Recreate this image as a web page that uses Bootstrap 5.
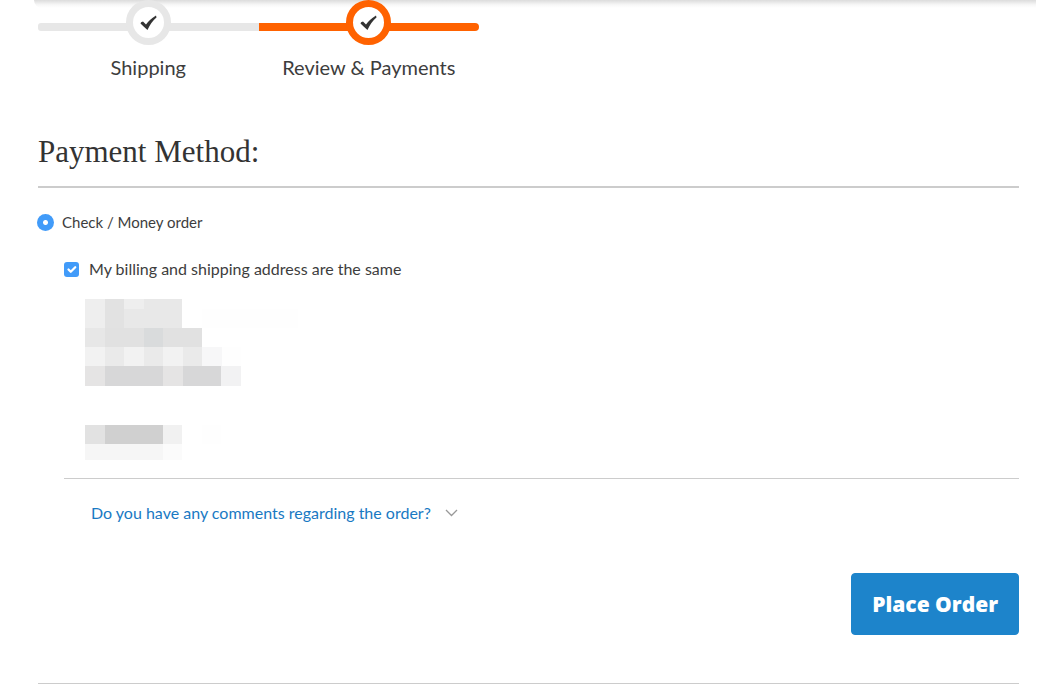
<!DOCTYPE html>
<html lang="en">
<head>
<meta charset="utf-8">
<meta name="viewport" content="width=device-width, initial-scale=1">
<title>Checkout</title>
<link href="https://cdn.jsdelivr.net/npm/bootstrap@5.3.0/dist/css/bootstrap.min.css" rel="stylesheet">
<style>
body { font-family: Lato, "Open Sans", sans-serif; font-size: 16px; line-height: 24px; color: #3d3d3d; background: #fff; }
.top-shade { height: 8px; left: 34px; right: 6px; background: linear-gradient(#dcdcdc, #f7f7f7 60%, #fff); border-bottom-left-radius: 8px; }
.checkout { padding: 0 23px 0 38px; }
.steps { max-width: 441px; }
.step { --tone: #e7e7e7; font-size: 20px; }
.step::before { content: ""; position: absolute; left: 0; right: 0; top: 23px; height: 8px; background: var(--tone); }
.step:first-child::before { border-radius: 3px 0 0 3px; }
.step:last-child::before { border-radius: 0 4px 4px 0; }
.step.current { --tone: #ff6200; }
.dot { width: 45px; height: 45px; border: 7px solid var(--tone); background: #fff; margin-bottom: 10px; }
.title { font-family: "Liberation Serif", "Times New Roman", serif; font-size: 31px; line-height: 40px; margin-top: 53px; padding-bottom: 14px; border-bottom: 2px solid #ccc; color: #333; }
.form-check-input.pick { float: none; margin: 0; flex: none; border: 0; background-color: #419bf9; }
.form-check-input.pick:not(:checked) { background-color: #ccc; }
.pick[type=radio] { width: 17px; height: 17px; }
.form-check-input.pick[type=radio]:checked { background-image: radial-gradient(circle, #fff 2px, transparent 3px); }
.pick[type=checkbox] { width: 15px; height: 15px; border-radius: 3px; }
.method { margin: 22px 0 23px -1px; gap: 8px; font-size: 15px; }
.billing { margin-left: 26px; }
.same { gap: 10px; margin-bottom: 18px; }
.address { margin: 0 0 18px 21px; }
.comments { border-top: 1px solid #ccc; padding: 22px 0 0 27px; }
.comments a { color: #1979c3; gap: 14px; }
.order-btn { --bs-btn-bg: #1d84cb; --bs-btn-color: #fff; --bs-btn-hover-bg: #006bb4; --bs-btn-hover-color: #fff; --bs-btn-border-color: #1d84cb; font-family: "Open Sans", sans-serif; font-weight: 800; font-size: 21px; line-height: 30px; padding: 15px 20px; border-radius: 4px; margin: 48px 0; }
.end { border-top: 1px solid #ccc; }
</style>
</head>
<body>
<div class="top-shade position-absolute top-0"></div>
<main class="checkout position-relative">
  <ol class="steps list-unstyled d-flex mb-0">
    <li class="step position-relative flex-fill w-50 text-center">
      <div class="dot position-relative rounded-circle mx-auto d-flex align-items-center justify-content-center">
        <svg width="21" height="17" viewBox="0 0 19 17" aria-hidden="true"><path d="M1.500 9.500Q1.500 8 4 7.500L7 10.500Q10 6 17 1.500L17.500 3.500Q12 8 8.500 16Q5 13 1.500 9.500Z" fill="#333"/></svg>
      </div>
      <span>Shipping</span>
    </li>
    <li class="step current position-relative flex-fill w-50 text-center">
      <div class="dot position-relative rounded-circle mx-auto d-flex align-items-center justify-content-center">
        <svg width="21" height="17" viewBox="0 0 19 17" aria-hidden="true"><path d="M1.500 9.500Q1.500 8 4 7.500L7 10.500Q10 6 17 1.500L17.500 3.500Q12 8 8.500 16Q5 13 1.500 9.500Z" fill="#333"/></svg>
      </div>
      <span>Review &amp; Payments</span>
    </li>
  </ol>

  <h1 class="title mb-0 fw-normal">Payment Method:</h1>

  <form>
    <div class="method d-flex align-items-center">
      <input class="form-check-input pick" type="radio" name="method" id="check" checked>
      <label for="check">Check / Money order</label>
    </div>
    <div class="billing">
      <div class="same d-flex align-items-center">
        <input class="form-check-input pick" type="checkbox" id="same" checked>
        <label for="same">My billing and shipping address are the same</label>
      </div>
      <!-- masked address -->
      <svg class="address d-block" width="215" height="161" viewBox="0 0 215 161" shape-rendering="crispEdges" role="img" aria-label="Hidden address">
        <path fill="#eeeeee" d="M0 0h20v29H0zM39 0h20v10H39z"/>
        <path fill="#e2e2e2" d="M20 0h19v29H20z"/>
        <path fill="#e8e8e8" d="M59 0h38v10H59zM39 10h58v19H39z"/>
        <path fill="#fefefe" d="M117 10h96v19h-96zM137 48h19v19h-19zM117 126h19v19h-19z"/>
        <path fill="#e7e7e7" d="M0 29h20v19H0z"/>
        <path fill="#e1e1e1" d="M20 29h39v19H20zM78 29h39v19H78z"/>
        <path fill="#d9dbdc" d="M59 29h19v19H59z"/>
        <path fill="#f2f2f2" d="M0 48h20v19H0zM39 48h20v19H39zM78 48h20v19H78z"/>
        <path fill="#eaeaea" d="M20 48h19v19H20zM59 48h19v19H59zM98 48h19v19H98z"/>
        <path fill="#f7f7f8" d="M117 48h20v19h-20z"/>
        <path fill="#e5e4e4" d="M0 67h20v20H0zM78 67h20v20H78z"/>
        <path fill="#d7d7d8" d="M20 67h58v20H20zM98 67h38v20H98z"/>
        <path fill="#f2f2f3" d="M136 67h20v20h-20z"/>
        <path fill="#e2e2e2" d="M0 126h20v19H0z"/>
        <path fill="#d0d0d0" d="M20 126h58v19H20z"/>
        <path fill="#f1f1f1" d="M78 126h19v19H78z"/>
        <path fill="#f6f6f6" d="M0 145h78v16H0z"/>
        <path fill="#fbfbfb" d="M78 145h19v16H78z"/>
      </svg>
      <div class="comments">
        <a href="#comments" class="d-inline-flex align-items-center text-decoration-none">Do you have any comments regarding the order?
          <svg width="13" height="8" viewBox="0 0 13 8" fill="none" stroke="#999" stroke-width="1.300" aria-hidden="true"><path d="M1 1 6.500 6.500 12 1"/></svg>
        </a>
      </div>
    </div>
    <div class="d-flex justify-content-end">
      <button type="submit" class="btn order-btn">Place Order</button>
    </div>
  </form>
  <div class="end"></div>
</main>
<script src="https://cdn.jsdelivr.net/npm/bootstrap@5.3.0/dist/js/bootstrap.bundle.min.js"></script>
</body>
</html>
